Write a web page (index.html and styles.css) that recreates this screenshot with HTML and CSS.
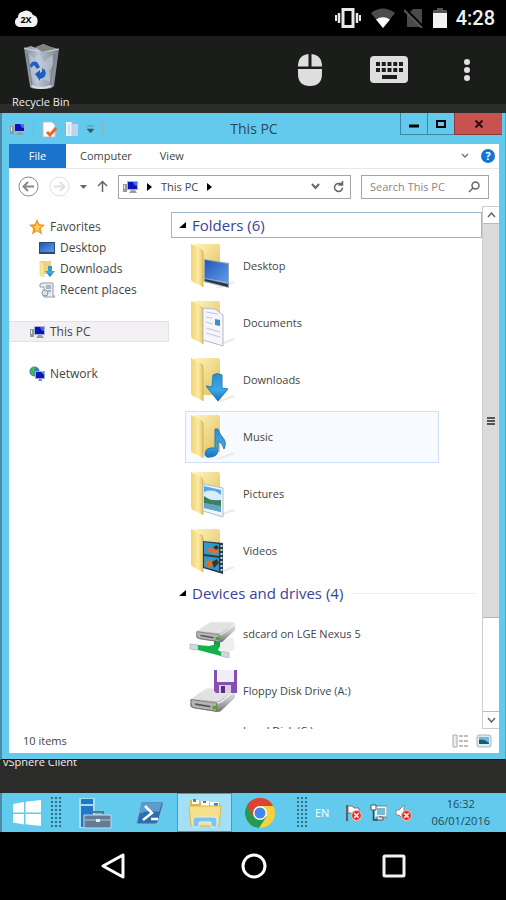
FILE: index.html
```
<!DOCTYPE html>
<html lang="en">
<head>
    <meta charset="UTF-8">
    <meta content="width=device-width, initial-scale=1.0" name="viewport">
    <title>This PC</title>
    <link rel="stylesheet" href="styles.css">
</head>
<body>
<!-- shared icon parts -->
<svg class="defs" width="0" height="0" aria-hidden="true">
    <defs>
        <linearGradient id="fold-front" x1="0" x2="1"><stop offset="0" stop-color="#f0d273"/><stop offset=".6" stop-color="#fbeba6"/><stop offset="1" stop-color="#e6c765"/></linearGradient>
        <linearGradient id="fold-back" x1="0" x2="1" y2="1"><stop offset="0" stop-color="#fdf3bd"/><stop offset="1" stop-color="#e3bf59"/></linearGradient>
        <linearGradient id="blue" x1="0" x2="1" y2="1"><stop offset="0" stop-color="#2456b4"/><stop offset="1" stop-color="#5d9df0"/></linearGradient>
        <linearGradient id="arrow" x2="0" y2="1"><stop offset="0" stop-color="#2f8fd0"/><stop offset=".6" stop-color="#3ba8e6"/><stop offset="1" stop-color="#1670b4"/></linearGradient>
        <linearGradient id="metal" x2="0" y2="1"><stop offset="0" stop-color="#f1f1f1"/><stop offset=".5" stop-color="#c2c2c2"/><stop offset="1" stop-color="#707070"/></linearGradient>
        <linearGradient id="bin" x1="0" x2="1"><stop offset="0" stop-color="#7d858f"/><stop offset=".4" stop-color="#b7c3d3"/><stop offset="1" stop-color="#7b838c"/></linearGradient>
    </defs>
    <symbol id="folder" viewBox="0 0 48 48">
        <path d="M26 46l18-7 2 2-14 5z" fill="#ececec"/>
        <path d="M5 2h24q2 0 2 3v34H12z" fill="url(#fold-back)"/>
        <path d="M2 2l10 5q2 1 2 4v34L4 40q-2-1-2-3z" fill="url(#fold-front)"/>
        <path d="M12 8q2 1 2 4v33" fill="none" stroke="#d3b256"/>
    </symbol>
    <symbol id="pc" viewBox="0 0 16 16">
        <path d="M1 5h4v8H1z" fill="#8f9aa3"/>
        <path d="M2 6h1v4H2z" fill="#e5e9ec"/>
        <path d="M5 2h11v9H5z" fill="#a8b3cc"/>
        <path d="M6 3h9v7H6z" fill="#0a13b5"/>
        <path d="M11 3h4v4q-3 0-4-4z" fill="#3f6cf0"/>
        <path d="M9 11h4l2 3H7z" fill="#9ba0a4"/>
    </symbol>
    <symbol id="drive" viewBox="2 0 45 29" preserveAspectRatio="none">
        <path d="M3 14L17 2q1-1 3-1h23q3 0 3 3v8L33 26q-1 2-4 2L6 24q-4-1-4-5z" fill="url(#metal)"/>
        <path d="M4 13L18 3q1-1 3-1h21q3 0 2 2L31 15q-1 1-3 1z" fill="#e2e2e2"/>
        <path d="M3 14l25 4q3 0 5-2l12-11" fill="none" stroke="#fff"/>
        <path d="M3 14l25 4v9L6 23q-3-1-3-4z" fill="#b5b5b5" stroke="#777"/>
        <path d="M7 18l15 3v2L7 20z" fill="#555"/>
        <path d="M24 21h4v4h-4z" fill="#48ad20"/>
    </symbol>
    <symbol id="grip" viewBox="0 0 10 32">
        <path d="M1 0v32M5 0v32M9 0v32" stroke="#326e86" stroke-width="2" stroke-dasharray="2 2"/>
    </symbol>
    <symbol id="error" viewBox="0 0 10 10">
        <circle cx="5" cy="5" r="4.5" fill="#dc3326" stroke="#f5b4ad"/>
        <path d="M3 3l4 4M7 3L3 7" stroke="#fff" stroke-width="1.4"/>
    </symbol>
</svg>

<header class="statusbar">
    <svg width="24" height="18" viewBox="0 0 24 18" role="img" aria-label="2X Client">
        <path d="M5 18a5 5 0 0 1-1-9.500A6 6 0 0 1 9 2.500 7 7 0 0 1 19 6 6.200 6.200 0 0 1 19 18z" fill="#f3f3f3"/>
        <text x="12" y="14" class="cloud-text">2X</text>
    </svg>
    <div class="signals">
        <svg width="28" height="20" viewBox="0 0 28 20" fill="none" stroke="#e8e8e8">
            <path d="M9 1.500h10v17H9z" stroke-width="3"/>
            <path d="M5 5v10M23 5v10" stroke-width="2.500"/><path d="M2 7v6M26 7v6" stroke-width="2"/>
        </svg>
        <svg width="24" height="20" viewBox="0 0 24 20">
            <path d="M0 5Q12-4 24 5L12 20z" fill="#4c4c4c"/>
            <path d="M5 11.500Q12 7 19 11.500L12 20z" fill="#fff"/>
        </svg>
        <svg width="20" height="20" viewBox="0 0 20 20">
            <path d="M9 1h8l1 1v17H3V7z" fill="#4a4a4a"/>
            <path d="M1 1l18 18" stroke="#000" stroke-width="3"/><path d="M0 2l18 18" stroke="#5a5a5a" stroke-width="2"/>
        </svg>
        <svg width="14" height="20" viewBox="0 0 14 20">
            <path d="M4 0h6v2h4v4H0V2h4z" fill="#555"/><path d="M0 5h14v15H0z" fill="#f2f2f2"/>
        </svg>
        <time>4:28</time>
    </div>
</header>

<main class="desktop">
    <div class="toolbar">
        <a class="recycle" href="#">
            <svg width="40" height="48" viewBox="0 0 40 48">
                <path d="M3 5l7-2 5 2 7-4 8 3 8 2-5 37q-1 3-13 3T9 43z" fill="url(#bin)"/>
                <path d="M3 5q17 6 35 1" fill="none" stroke="#d4d8dc"/>
                <path d="M14 4l9-3 10 5-12 3z" fill="#85837d"/>
                <path d="M8 10l5 5 6-4 4 8 8-7 2 9-5 7 2 12-8-4-7 6-5-9z" fill="#c5d0e0" opacity=".55"/>
                <path d="M6 10l5 32M34 11l-5 31" stroke="#6e7680" opacity=".8"/>
                <path d="M11 43q9 4 19 0" fill="none" stroke="#ddd" stroke-width="2"/>
                <path d="M9 22q2-5 7-3l3 5-3 2-3-4-3 3zM14 31l5-4v3q3-1 2-5l3 2q3 7-5 9v2z" fill="#1f5cc0"/>
            </svg>
            <span>Recycle Bin</span>
        </a>
        <div class="tools">
            <button type="button" aria-label="Mouse">
                <svg width="26" height="34" viewBox="0 0 26 34" fill="#dedede">
                    <path d="M11.500 1v12.500H1Q1 2 11.500 1zM14.500 1v12.500H25Q25 2 14.500 1zM1 16h24v5q0 12-12 12T1 21z"/>
                </svg>
            </button>
            <button type="button" aria-label="Keyboard">
                <svg width="40" height="29" viewBox="0 0 40 29">
                    <rect x="1" y="1" width="38" height="27" rx="4" fill="#dedede"/>
                    <path d="M7 9h27M7 15h27" stroke="#1b1d1b" stroke-width="4" stroke-dasharray="4 1.750"/>
                    <path d="M13 22h15" stroke="#1b1d1b" stroke-width="4"/>
                </svg>
            </button>
            <button type="button" aria-label="More options">
                <svg width="8" height="24" viewBox="0 0 8 24" fill="#e2e2e2">
                    <circle cx="4" cy="4" r="3"/><circle cx="4" cy="12" r="3"/><circle cx="4" cy="20" r="3"/>
                </svg>
            </button>
        </div>
    </div>

    <section class="window">
        <div class="titlebar">
            <div class="quick">
                <svg width="16" height="16"><use href="#pc"/></svg>
                <i class="sep"></i>
                <svg width="15" height="16" viewBox="0 0 15 16">
                    <path d="M1 1h9l3 3v12H1z" fill="#fff" stroke="#b5c3cc"/><path d="M5 11l3 3 6-7" fill="none" stroke="#e8682a" stroke-width="3"/>
                </svg>
                <svg width="14" height="16" viewBox="0 0 14 16">
                    <path d="M1 1h6v14H1z" fill="#eef4fb"/><path d="M7 3h6v12H7z" fill="#bcd4ef"/><path d="M7 1v14M4 3v11" stroke="#b9c9dc"/>
                </svg>
                <svg width="7" height="8" viewBox="0 0 7 8"><path d="M0 1h7M0 4h7L3.500 8z" fill="#345a6b" stroke="#345a6b" stroke-width=".5"/></svg>
                <i class="sep"></i>
            </div>
            <h1>This PC</h1>
            <div class="controls">
                <button type="button" aria-label="Minimize"><svg width="12" height="10"><path d="M1 7h10" stroke="#000" stroke-width="3"/></svg></button>
                <button type="button" aria-label="Maximize"><svg width="12" height="10"><path d="M2 2h8v6H2z" fill="none" stroke="#000" stroke-width="2"/></svg></button>
                <button type="button" class="close" aria-label="Close"><svg width="10" height="10"><path d="M1.500 1.500l7 7M8.500 1.500l-7 7" stroke="#2a0f0e" stroke-width="2"/></svg></button>
            </div>
        </div>

        <div class="client">
            <nav class="ribbon">
                <button type="button" class="file">File</button>
                <button type="button">Computer</button>
                <button type="button">View</button>
                <div class="ribbon-end">
                    <svg width="8" height="6"><path d="M1 1l3 3 3-3" fill="none" stroke="#777" stroke-width="1.500"/></svg>
                    <button type="button" class="help" aria-label="Help">?</button>
                </div>
            </nav>

            <div class="navbar">
                <button type="button" aria-label="Back"><svg width="21" height="21" viewBox="0 0 21 21" fill="none" stroke="#888"><circle cx="10.500" cy="10.500" r="9.500"/><path d="M16 10.500H6M10 6l-4.500 4.500L10 15" stroke-width="2"/></svg></button>
                <button type="button" aria-label="Forward"><svg width="21" height="21" viewBox="0 0 21 21" fill="none" stroke="#e0e0e0"><circle cx="10.500" cy="10.500" r="9.500"/><path d="M5 10.500h10M11 6l4.500 4.500L11 15" stroke-width="2"/></svg></button>
                <svg width="7" height="4"><path d="M0 0h7L3.500 4z" fill="#666"/></svg>
                <button type="button" aria-label="Up"><svg width="11" height="13" fill="none" stroke="#666" stroke-width="1.500"><path d="M5.500 12V2M1 6l4.500-4.500L10 6"/></svg></button>
                <div class="address">
                    <svg width="16" height="16"><use href="#pc"/></svg>
                    <svg width="5" height="8"><path d="M0 0l5 4-5 4z"/></svg>
                    <span>This PC</span>
                    <svg width="5" height="8"><path d="M0 0l5 4-5 4z"/></svg>
                    <div class="address-end">
                        <svg width="9" height="7"><path d="M1 1l3.500 4L8 1" fill="none" stroke="#666" stroke-width="2"/></svg>
                        <svg width="11" height="12" viewBox="0 0 11 12"><path d="M9.500 6.500A4 4 0 1 1 6 2.500h3M9.500 0v4h-4" fill="none" stroke="#666" stroke-width="1.500"/></svg>
                    </div>
                </div>
                <label class="search">
                    <input type="text" placeholder="Search This PC" aria-label="Search This PC">
                    <svg width="12" height="12" fill="none" stroke="#666" stroke-width="1.500"><circle cx="7.500" cy="4.500" r="3.500"/><path d="M5 7l-4 4"/></svg>
                </label>
            </div>

            <div class="explorer">
                <aside class="sidebar">
                    <a href="#">
                        <svg width="16" height="16" viewBox="0 0 16 16"><path d="M8 0l2.300 5.300 5.700.5-4.300 3.800 1.300 5.900-5-3.200-5 3.200 1.300-5.900L0 5.800l5.700-.5z" fill="#f58d20"/><path d="M8 3l1.300 3.500 3.700.5-3 2.500.8 3.500L8 11l-2.500 1.500.7-3.300L4 7.200l2.700-.5z" fill="#ffd04f"/></svg>
                        Favorites
                    </a>
                    <a href="#" class="child">
                        <svg width="16" height="16" viewBox="0 0 16 16"><path d="M0 2h16v12H0z" fill="#294b78"/><path d="M1 3h14v9H1z" fill="url(#blue)"/></svg>
                        Desktop
                    </a>
                    <a href="#" class="child">
                        <svg width="16" height="16" viewBox="0 0 16 16"><path d="M2 0h10v13H4z" fill="#efd480"/><path d="M1 0l4 2v14l-4-2z" fill="#f8e7a0" stroke="#dcbc5a" stroke-width=".5"/><path d="M9 5h4v5h3l-5 6-5-6h3z" fill="url(#arrow)"/></svg>
                        Downloads
                    </a>
                    <a href="#" class="child">
                        <svg width="16" height="16" viewBox="0 0 16 16"><path d="M3 1h11v13h2v1H5V5H1V2z" fill="#e8ecee" stroke="#959da2"/><path d="M7 4h5M7 6h5M9 9h3" stroke="#6a7f9a"/><circle cx="6" cy="11" r="3" fill="#d7e4ee" stroke="#8794a0"/></svg>
                        Recent places
                    </a>
                    <a href="#" class="top selected">
                        <svg width="16" height="16"><use href="#pc"/></svg>
                        This PC
                    </a>
                    <a href="#" class="top">
                        <svg width="16" height="16" viewBox="0 0 16 16"><circle cx="5.500" cy="5.500" r="5" fill="#2c7fd0"/><path d="M2 3q3-4 5-1L5 5l1 3-2 2-3-4z" fill="#47b455"/><path d="M6 5h10v8H6z" fill="#9eabd6"/><path d="M7 6h8v6H7z" fill="#0c18b4"/><path d="M12 6h3v3z" fill="#5985f2"/><path d="M10 13h3v2h-4z" fill="#8d8ea8"/></svg>
                        Network
                    </a>
                </aside>

                <div class="files">
                    <h2 class="focused"><svg width="7" height="7"><path d="M7 0v6H0z"/></svg>Folders (6)</h2>
                    <a href="#" class="item">
                        <svg width="48" height="48" viewBox="0 0 48 48"><use href="#folder"/><path d="M15 17l25 4v25l-25-6z" fill="#9aa5b3"/><path d="M16 18l23 4v18l-23-4z" fill="url(#blue)"/><path d="M16 37l23 5v3l-23-6z" fill="#22384c"/></svg>
                        Desktop
                    </a>
                    <a href="#" class="item">
                        <svg width="48" height="48" viewBox="0 0 48 48"><use href="#folder"/><path d="M14 9l12 1 8 6v31l-20-6z" fill="#f5f6fb" stroke="#b4b9c4"/><path d="M17 13l12 2M17 18l6 1M17 23l7 2M17 29l14 4M17 34l14 4" stroke="#c0c8d8"/><path d="M26 20l5 1v6l-5-1z" fill="#3a8fc4"/></svg>
                        Documents
                    </a>
                    <a href="#" class="item">
                        <svg width="48" height="48" viewBox="0 0 48 48"><use href="#folder"/><path d="M24 19q4-3 9 0v13l6 1-10 12-12-15 6 1z" fill="url(#arrow)" stroke="#257cb4"/></svg>
                        Downloads
                    </a>
                    <a href="#" class="item hover">
                        <svg width="48" height="48" viewBox="0 0 48 48"><use href="#folder"/><path d="M26 16h3q2 6 5 9 4 4 1 11-1-6-6-8v9q0 6-7 7t-6-4q1-6 10-5z" fill="url(#arrow)" stroke="#257cb4"/></svg>
                        Music
                    </a>
                    <a href="#" class="item">
                        <svg width="48" height="48" viewBox="0 0 48 48"><use href="#folder"/><path d="M14 14l20 4v29l-20-6z" fill="#eef4f8" stroke="#b2bfc9"/><path d="M15 16l17 4v22l-17-4z" fill="#5aa5e4"/><path d="M15 22q9-4 17 3v5H15z" fill="#d8eefa"/><path d="M15 26q8 6 17 4v6l-17-3z" fill="#417e57"/><path d="M15 33l17 3v6l-17-4z" fill="#61a6c2"/></svg>
                        Pictures
                    </a>
                    <a href="#" class="item">
                        <svg width="48" height="48" viewBox="0 0 48 48"><use href="#folder"/><path d="M14 14l20 2v31l-20-6z" fill="#263c4d"/><path d="M15 15l15 2v12l-15-2zM15 29l15 2v13l-15-4z" fill="#2c9bd2"/><path d="M17 24l4-4 3 3 3-5 3 5-3 5zM16 36l5-4 3 6-4 3z" fill="#d57332"/><path d="M24 20l4-2 2 3-3 2zM23 35l5-3 2 4-5 5z" fill="#47331c"/><path d="M32.500 18v28" stroke="#cfd4d6" stroke-width="2" stroke-dasharray="2 2"/></svg>
                        Videos
                    </a>
                    <h2 class="devices"><svg width="7" height="7"><path d="M7 0v6H0z"/></svg>Devices and drives (4)</h2>
                    <a href="#" class="item">
                        <svg width="48" height="48" viewBox="0 0 48 48"><path d="M24 34l20-7 2 12-8 4z" fill="#efefef"/><path d="M25 29l6 1v7l-6-2z" fill="#169b3c"/><use href="#drive" x="7" y="11" width="40" height="22"/><path d="M1 34l8 1v5l-8-1zM32 41l8 2v5l-8-2z" fill="#cddcda" stroke="#9aa8a6" stroke-width=".6"/><path d="M9 35l11 1 8-2 3 2-2 4 3 2v4L9 40z" fill="#18b04a"/></svg>
                        sdcard on LGE Nexus 5
                    </a>
                    <a href="#" class="item">
                        <svg width="48" height="48" viewBox="0 0 48 48"><use href="#drive" x="1" y="20" width="46" height="26"/><path d="M25 3h23v23H27l-2-2z" fill="#8650b0"/><path d="M28 3h17v12H28z" fill="#eff0f7"/><path d="M30 18h12v8H30z" fill="#d6cfe3"/><path d="M32 19h4v7h-4z" fill="#553079"/></svg>
                        Floppy Disk Drive (A:)
                    </a>
                    <a href="#" class="item volume">
                        <svg width="48" height="48" viewBox="0 0 48 48"><use href="#drive" x="1" y="20" width="46" height="26"/></svg>
                        Local Disk (C:)
                    </a>
                </div>

                <div class="scrollbar">
                    <button type="button" aria-label="Scroll up"><svg width="9" height="6"><path d="M1 5l3.500-4L8 5" fill="none" stroke="#666" stroke-width="1.500"/></svg></button>
                    <div class="track"><div class="thumb"><i></i></div></div>
                    <button type="button" aria-label="Scroll down"><svg width="9" height="6"><path d="M1 1l3.500 4L8 1" fill="none" stroke="#666" stroke-width="1.500"/></svg></button>
                </div>
            </div>

            <footer class="summary">
                <span>10 items</span>
                <button type="button" aria-label="Details view"><svg width="16" height="14"><path d="M1 1h4v12H1z" fill="#eee" stroke="#aaa"/><path d="M7 2h9M7 7h9M7 12h9" stroke="#aaa" stroke-width="1.500" stroke-dasharray="4 1"/></svg></button>
                <button type="button" aria-label="Large icons view"><svg width="16" height="14"><rect x="1" y="1" width="14" height="12" rx="2" fill="#dbe9f2" stroke="#a9b7c2"/><path d="M3 3h10v7H3z" fill="#6fb9e8"/><path d="M3 6q5-2 10 3v1H3z" fill="#185c6e"/></svg></button>
            </footer>
        </div>
    </section>

    <div class="shortcut"><span>vSphere Client</span></div>
</main>

<div class="taskbar">
    <button type="button" class="start" aria-label="Start">
        <svg width="28" height="26" viewBox="0 0 28 26" fill="#fff"><path d="M0 4l11-2v10.500H0zM12.500 1.800L28 0v12.500H12.500zM0 14h11v10.500L0 22.500zM12.500 14H28v12l-15.500-1.800z"/></svg>
    </button>
    <svg width="10" height="32"><use href="#grip"/></svg>
    <div class="pinned">
        <button type="button" aria-label="Server Manager">
            <svg width="34" height="32" viewBox="0 0 34 32"><path d="M1 1h16v30H1z" fill="#a9dcf3"/><path d="M3 2h12v5H3zM3 9h12v21H3z" fill="#1c78c8"/><path d="M14 17v-2h11v2" fill="none" stroke="#5b7488" stroke-width="2"/><path d="M6 18h27v13H6z" fill="#627c93" stroke="#c5dcea"/><path d="M7 23h25" stroke="#b8cad7"/><path d="M18 22h4v3h-4z" fill="#e3edf3"/></svg>
        </button>
        <button type="button" aria-label="PowerShell">
            <svg width="28" height="24" viewBox="0 0 28 24"><path d="M5 1h21q2 0 1 3l-5 17q-1 2-3 2H2q-2 0-1-3L5 3z" fill="#2c6fae" stroke="#8cb8d8"/><path d="M6 2h20l-3 9Q12 8 3 13z" fill="#5b9dcc"/><path d="M9 5l7 7-9 7M15 18h7" fill="none" stroke="#fff" stroke-width="2.500"/></svg>
        </button>
        <button type="button" class="active" aria-label="File Explorer">
            <svg width="34" height="30" viewBox="0 0 34 30"><path d="M2 2h9l2 3h19v23H2z" fill="#d9b655"/><path d="M4 2h7v4H4zM13 3h8v5h-8zM22 4h9v5h-9z" fill="#fff"/><path d="M5 1h3v3H5z" fill="#3aa64b"/><path d="M15 3h3v2h-3z" fill="#d8503a"/><path d="M26 5h4v3h-4z" fill="#3985c8"/><path d="M1 8h32l-2 20H3z" fill="#f6df8b" stroke="#dcb851"/><path d="M5 29v-7q0-3 3-3h18q3 0 3 3v7h-6v-5H11v5z" fill="#7cc5ec" stroke="#d9f1fb"/></svg>
        </button>
        <button type="button" aria-label="Chrome">
            <svg width="30" height="30" viewBox="0 0 30 30"><circle cx="15" cy="15" r="15" fill="#f9cf3c"/><path d="M15 15L2 7.500A15 15 0 0 1 28 7.500H15z" fill="#d94436"/><path d="M2 7.500A15 15 0 0 0 14 30l7.500-11.500L15 15z" fill="#259a55"/><path d="M2 7.500L8.500 19 15 8h13A15 15 0 0 0 2 7.500z" fill="#d94436"/><circle cx="15" cy="15" r="7" fill="#fff"/><circle cx="15" cy="15" r="5.500" fill="#4286ee"/></svg>
        </button>
    </div>
    <svg width="10" height="32"><use href="#grip"/></svg>
    <div class="tray">
        <span class="lang">EN</span>
        <svg width="17" height="18" viewBox="0 0 17 18"><path d="M2 1v16" stroke="#5d5d5d" stroke-width="2"/><path d="M3 2h4l2 2h5v7H8L6 9H3z" fill="#fff" stroke="#777"/><use href="#error" x="6" y="6" width="11" height="11"/></svg>
        <svg width="17" height="18" viewBox="0 0 17 18"><path d="M6 3h10v9H6z" fill="#75bcd8" stroke="#f5f5f5" stroke-width="2"/><path d="M5 2h12v11H6" fill="none" stroke="#666" stroke-width=".7"/><path d="M9 13h4v3H7v-2" fill="#eee" stroke="#555"/><path d="M1 1h5v5H1z" fill="#fff" stroke="#555"/><path d="M3.500 6v10h4" fill="none" stroke="#444" stroke-width="1.500"/></svg>
        <svg width="17" height="18" viewBox="0 0 17 18"><path d="M1 6h3l5-5v15l-5-5H1z" fill="#fff" stroke="#888"/><use href="#error" x="6" y="6" width="11" height="11"/></svg>
        <div class="clock"><time>16:32</time><time>06/01/2016</time></div>
    </div>
</div>

<nav class="keys">
    <button type="button" aria-label="Back"><svg width="26" height="28"><path d="M23 3v22L3 14z" fill="none" stroke="#fff" stroke-width="3" stroke-linejoin="round"/></svg></button>
    <button type="button" aria-label="Home"><svg width="26" height="26"><circle cx="13" cy="13" r="11" fill="none" stroke="#fff" stroke-width="3"/></svg></button>
    <button type="button" aria-label="Overview"><svg width="24" height="24"><rect x="2" y="2" width="20" height="20" rx="1" fill="none" stroke="#f2f2f2" stroke-width="3"/></svg></button>
</nav>
</body>
</html>
```
FILE: styles.css
```
* {
    box-sizing: border-box;
}

body {
    display: flex;
    flex-direction: column;
    height: 100vh;
    margin: 0;
    background: #000;
    color: #444;
    font-family: "Open Sans", "Noto Sans", sans-serif;
    font-size: 12px;
    line-height: 16px;
}

svg {
    display: block;
    flex: none;
}

.defs {
    position: absolute;
}

button {
    display: flex;
    align-items: center;
    justify-content: center;
    padding: 0;
    border: none;
    background: none;
    color: inherit;
    font: inherit;
}

a {
    color: inherit;
    text-decoration: none;
}

h1, h2 {
    margin: 0;
    font-weight: 400;
}

/* phone status bar */
.statusbar {
    display: flex;
    align-items: center;
    justify-content: space-between;
    flex: none;
    height: 36px;
    padding: 0 11px 0 14px;
}

.cloud-text {
    font: 700 9px "Open Sans", sans-serif;
    text-anchor: middle;
}

.signals {
    display: flex;
    align-items: center;
    gap: 9px;
    color: #f2f2f2;
    font: 500 20px/24px Roboto, sans-serif;
}

/* remote desktop */
.desktop {
    display: flex;
    flex-direction: column;
    flex: 1;
    min-height: 0;
    background: #2b2b29;
}

.toolbar {
    display: flex;
    justify-content: space-between;
    flex: none;
    height: 77px;
    padding: 7px 35px 0 12px;
    background: linear-gradient(#1b1d1b 68px, #2a2c29 68px);
}

.recycle {
    display: flex;
    flex-direction: column;
    align-items: center;
    gap: 3px;
    color: #eee;
    font-size: 11px;
}

.tools {
    display: flex;
    align-items: center;
    gap: 46px;
    height: 53px;
}

.tools button:last-child {
    margin-left: 8px;
}

.window {
    display: flex;
    flex-direction: column;
    flex: 1;
    min-height: 0;
    padding: 0 6px 6px 7px;
    border-left: 2px solid #4a8aa6;
    border-right: 1px solid #4fa3c4;
    border-bottom: 1px solid #111;
    background: #63caee;
}

.titlebar {
    display: grid;
    grid-template-columns: 1fr auto 1fr;
    flex: none;
    height: 31px;
}

.quick {
    display: flex;
    align-items: center;
    gap: 8px;
}

.sep {
    width: 1px;
    height: 13px;
    background: #8cb0be;
}

.titlebar h1 {
    font-size: 14px;
    line-height: 31px;
    color: #28495a;
}

.controls {
    display: flex;
    justify-content: flex-end;
    align-items: flex-start;
    margin-right: -3px;
}

.controls button {
    width: 27px;
    height: 22px;
    border: 1px solid #3c89a6;
    border-top: none;
    border-right: none;
}

.controls .close {
    width: 48px;
    border-color: #8e3a35;
    background: #c75250;
}

.client {
    display: flex;
    flex-direction: column;
    flex: 1;
    min-height: 0;
    background: #fff;
}

.ribbon {
    display: flex;
    flex: none;
    height: 25px;
    border-bottom: 1px solid #e6e6e6;
    font-size: 11px;
}

.ribbon > button {
    padding: 0 14px;
}

.ribbon .file {
    width: 57px;
    background: #1a74cc;
    color: #fff;
}

.ribbon-end {
    display: flex;
    align-items: center;
    gap: 12px;
    margin-left: auto;
    padding-right: 4px;
}

.help {
    width: 14px;
    height: 14px;
    border-radius: 50%;
    background: #1477d4;
    color: #fff;
    font-weight: 700;
}

.navbar {
    display: flex;
    align-items: center;
    gap: 10px;
    flex: none;
    height: 37px;
    padding: 0 10px 2px 9px;
    font-size: 11px;
}

.address, .search {
    display: flex;
    align-items: center;
    height: 24px;
    border: 1px solid #a5a5a5;
}

.address {
    flex: 1;
    gap: 9px;
    padding: 0 6px 0 3px;
}

.address-end {
    display: flex;
    align-items: center;
    gap: 13px;
    margin-left: auto;
}

.search {
    width: 128px;
    padding: 0 8px;
}

.search input {
    flex: 1;
    min-width: 0;
    padding: 0;
    border: none;
    outline: none;
    font: inherit;
}

.search input::placeholder {
    color: #888;
}

.explorer {
    display: flex;
    flex: 1;
    min-height: 0;
}

.sidebar {
    flex: none;
    width: 160px;
    padding-top: 10px;
    font-size: 12px;
}

.sidebar a {
    display: flex;
    align-items: center;
    gap: 5px;
    height: 21px;
    padding-left: 19px;
    border: 1px solid transparent;
}

.sidebar .child {
    padding-left: 29px;
}

.sidebar .top {
    margin-top: 21px;
}

.sidebar .selected {
    border-color: #e4e0e4;
    background: #f3f0f4;
}

.files {
    flex: 1;
    min-width: 0;
    margin-left: 2px;
    padding-top: 6px;
    overflow: hidden;
}

.files h2 {
    display: flex;
    align-items: center;
    gap: 6px;
    height: 26px;
    margin-bottom: 2px;
    padding: 0 6px 0 7px;
    border: 1px solid transparent;
    color: #39439b;
    font-size: 15px;
}

.files h2::after {
    content: "";
    flex: 1;
    height: 1px;
    margin-left: 2px;
    background: #e8edf8;
}

.files .devices {
    margin-top: -2px;
}

.files .focused {
    border-color: #9fb6d6;
}

.files .focused::after {
    background: none;
}

.item {
    display: flex;
    align-items: center;
    gap: 6px;
    height: 52px;
    margin: 0 43px 5px 14px;
    padding-left: 3px;
    border: 1px solid transparent;
    font-size: 11px;
}

.item.hover {
    border-color: #cfdff8;
    background: #f7fbff;
}

.item.volume {
    align-items: flex-start;
}

.scrollbar {
    display: flex;
    flex-direction: column;
    flex: none;
    width: 17px;
    border: 1px solid #ccc;
    border-right: none;
}

.scrollbar button {
    height: 16px;
}

.track {
    flex: 1;
    border-top: 1px solid #bbb;
    border-bottom: 1px solid #bbb;
}

.thumb {
    display: flex;
    align-items: center;
    justify-content: center;
    height: 81%;
    border-bottom: 1px solid #b5b5b5;
    background: #dbdbdb;
}

.thumb i {
    width: 8px;
    height: 8px;
    background: repeating-linear-gradient(#555 0 2px, #dbdbdb 2px 3px);
}

.summary {
    display: flex;
    align-items: center;
    gap: 8px;
    flex: none;
    height: 24px;
    padding: 0 7px 0 14px;
    font-size: 11px;
}

.summary span {
    flex: 1;
}

/* desktop icon label peeking out below the window */
.shortcut {
    display: flex;
    align-items: flex-start;
    flex: none;
    height: 33px;
    padding-left: 3px;
    overflow: hidden;
    color: #f0f0f0;
    font-size: 11px;
}

.shortcut span {
    display: flex;
    align-items: flex-end;
    height: 10px;
    overflow: hidden;
}

.taskbar {
    display: flex;
    align-items: center;
    flex: none;
    height: 39px;
    border-left: 2px solid #4a8aa6;
    background: #62caec;
}

.start {
    width: 49px;
    height: 100%;
}

.pinned {
    display: flex;
    height: 100%;
    margin: 0 10px 0 6px;
}

.pinned button {
    width: 55px;
    border: 1px solid transparent;
}

.pinned .active {
    border-color: #4b9ab7;
    background: #a3e0f5;
}

.tray {
    display: flex;
    align-items: center;
    gap: 8px;
    flex: 1;
    padding: 0 16px 0 8px;
}

.lang {
    margin-right: 8px;
    color: #fff;
    font-size: 11px;
}

.clock {
    display: flex;
    flex-direction: column;
    align-items: center;
    gap: 1px;
    margin-left: auto;
    color: #24485a;
    font-size: 11px;
}

/* phone navigation keys */
.keys {
    display: flex;
    align-items: center;
    justify-content: space-around;
    flex: none;
    height: 68px;
    padding: 0 43px;
}
```
